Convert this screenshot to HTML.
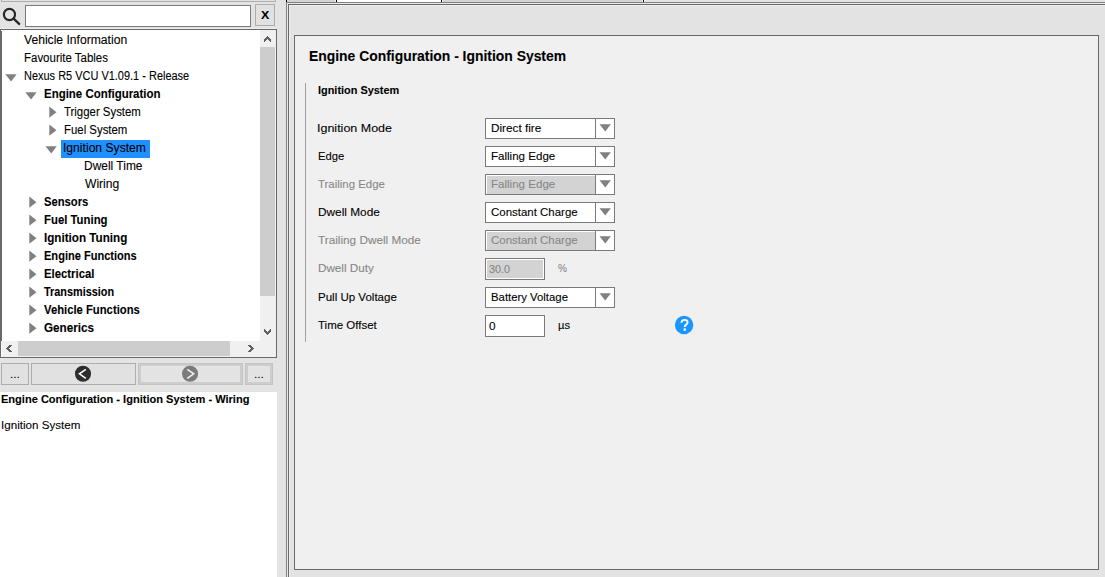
<!DOCTYPE html>
<html><head><meta charset="utf-8"><title>Ignition System</title>
<style>
html,body{margin:0;padding:0}
body{width:1105px;height:577px;overflow:hidden;background:#e3e3e3;position:relative;font-family:"Liberation Sans",sans-serif;font-size:12.3px;color:#000}
.a{position:absolute;box-sizing:border-box}
.t{position:absolute;white-space:pre;line-height:14px;height:14px;transform-origin:0 50%;margin:0;padding:0;-webkit-text-stroke:0.1px currentColor}
.b{font-weight:bold}
.btn{position:absolute;box-sizing:border-box;border:1px solid #adadad;background:#e1e1e1}
.dbtn{position:absolute;box-sizing:border-box;border:1px solid #c3c3c3;background:#e3e3e3;box-shadow:inset 0 0 0 2px #cdcdcd}
.cb{position:absolute;box-sizing:border-box;width:130px;height:21px;left:485px;border:1px solid #7a7a7a;background:#fff}
.cb i{position:absolute;left:109px;top:0;width:1px;height:19px;background:#7a7a7a}
.cb.d u{position:absolute;left:1px;top:1px;width:108px;height:18px;background:#d3d3d3}
.in{position:absolute;box-sizing:border-box;left:485px;width:60px;height:22px;border:1px solid #7a7a7a;background:#fff}
.in.d{box-shadow:inset 0 0 0 1px #fff;background:#d3d3d3}

</style></head><body>
<div class="btn" style="left:1px;top:-20px;width:275px;height:22px"></div>
<svg class="a" style="left:0;top:0" width="24" height="28" viewBox="0 0 24 28"><circle cx="9.45" cy="14.5" r="5.6" fill="none" stroke="#262626" stroke-width="2.15"/><path d="M13.6 18.7 L19.15 23.95" stroke="#262626" stroke-width="2.3" stroke-linecap="round" fill="none"/></svg>
<div class="a" style="left:25px;top:5px;width:226px;height:22px;border:1px solid #7a7a7a;background:#fff"></div>
<div class="btn" style="left:255px;top:4px;width:20px;height:22px"></div>
<div class="a" style="left:0;top:28px;width:277px;height:1px;background:#ededed"></div>
<div class="a" style="left:0;top:29px;width:277px;height:329px;background:#fff;border:1px solid #696969"></div>
<div class="a" style="left:1px;top:31px;width:1px;height:310px;background:#696969"></div>
<div class="a" style="left:61px;top:140px;width:89px;height:18px;background:#1e90ff"></div>
<div class="a" style="left:260px;top:30px;width:16px;height:311px;background:#f0f0f0"></div>
<div class="a" style="left:260px;top:47px;width:15px;height:249px;background:#cdcdcd"></div>
<div class="a" style="left:2px;top:341px;width:274px;height:16px;background:#f0f0f0"></div>
<div class="a" style="left:18px;top:341px;width:212px;height:15px;background:#cdcdcd"></div>
<svg class="a" style="left:264px;top:36px" width="7" height="6" viewBox="0 0 7 6" shape-rendering="crispEdges"><path d="M0 5h1v1h-1zM6 5h1v1h-1zM0 4h2v1h-2zM5 4h2v1h-2zM0 3h3v1h-3zM4 3h3v1h-3zM1 2h5v1h-5zM2 1h3v1h-3zM3 0h1v1h-1z" fill="#606060"/></svg>
<svg class="a" style="left:264px;top:329px" width="7" height="6" viewBox="0 0 7 6" shape-rendering="crispEdges"><path d="M0 0h1v1h-1zM6 0h1v1h-1zM0 1h2v1h-2zM5 1h2v1h-2zM0 2h3v1h-3zM4 2h3v1h-3zM1 3h5v1h-5zM2 4h3v1h-3zM3 5h1v1h-1z" fill="#606060"/></svg>
<svg class="a" style="left:6px;top:345px" width="6" height="7" viewBox="0 0 6 7" shape-rendering="crispEdges"><path d="M5 0h1v1h-1zM5 6h1v1h-1zM4 0h1v2h-1zM4 5h1v2h-1zM3 0h1v3h-1zM3 4h1v3h-1zM2 1h1v5h-1zM1 2h1v3h-1zM0 3h1v1h-1z" fill="#606060"/></svg>
<svg class="a" style="left:248px;top:345px" width="6" height="7" viewBox="0 0 6 7" shape-rendering="crispEdges"><path d="M0 0h1v1h-1zM0 6h1v1h-1zM1 0h1v2h-1zM1 5h1v2h-1zM2 0h1v3h-1zM2 4h1v3h-1zM3 1h1v5h-1zM4 2h1v3h-1zM5 3h1v1h-1z" fill="#606060"/></svg>
<svg class="a" style="left:5px;top:74px" width="13" height="9" viewBox="0 0 13 9"><path d="M0.35 0.30h11.3l-5.55 7.2z" fill="#808080"/></svg>
<svg class="a" style="left:25px;top:92px" width="13" height="9" viewBox="0 0 13 9"><path d="M0.30 0.30h11.3l-5.55 7.2z" fill="#808080"/></svg>
<svg class="a" style="left:49px;top:106px" width="9" height="13" viewBox="0 0 9 13"><path d="M0.30 0.50v11.3l7.2 -5.55z" fill="#808080"/></svg>
<svg class="a" style="left:49px;top:124px" width="9" height="13" viewBox="0 0 9 13"><path d="M0.30 0.50v11.3l7.2 -5.55z" fill="#808080"/></svg>
<svg class="a" style="left:45px;top:146px" width="13" height="9" viewBox="0 0 13 9"><path d="M0.50 0.30h11.3l-5.55 7.2z" fill="#808080"/></svg>
<svg class="a" style="left:29px;top:196px" width="9" height="13" viewBox="0 0 9 13"><path d="M0.30 0.50v11.3l7.2 -5.55z" fill="#808080"/></svg>
<svg class="a" style="left:29px;top:214px" width="9" height="13" viewBox="0 0 9 13"><path d="M0.30 0.50v11.3l7.2 -5.55z" fill="#808080"/></svg>
<svg class="a" style="left:29px;top:232px" width="9" height="13" viewBox="0 0 9 13"><path d="M0.30 0.50v11.3l7.2 -5.55z" fill="#808080"/></svg>
<svg class="a" style="left:29px;top:250px" width="9" height="13" viewBox="0 0 9 13"><path d="M0.30 0.50v11.3l7.2 -5.55z" fill="#808080"/></svg>
<svg class="a" style="left:29px;top:268px" width="9" height="13" viewBox="0 0 9 13"><path d="M0.30 0.50v11.3l7.2 -5.55z" fill="#808080"/></svg>
<svg class="a" style="left:29px;top:286px" width="9" height="13" viewBox="0 0 9 13"><path d="M0.30 0.50v11.3l7.2 -5.55z" fill="#808080"/></svg>
<svg class="a" style="left:29px;top:304px" width="9" height="13" viewBox="0 0 9 13"><path d="M0.30 0.50v11.3l7.2 -5.55z" fill="#808080"/></svg>
<svg class="a" style="left:29px;top:322px" width="9" height="13" viewBox="0 0 9 13"><path d="M0.30 0.50v11.3l7.2 -5.55z" fill="#808080"/></svg>
<div class="btn" style="left:1px;top:363px;width:28px;height:22px"></div>
<div class="btn" style="left:31px;top:363px;width:105px;height:22px"></div>
<div class="dbtn" style="left:138px;top:363px;width:105px;height:22px"></div>
<div class="dbtn" style="left:245px;top:363px;width:28px;height:22px"></div>
<svg class="a" style="left:74px;top:364px" width="18" height="20" viewBox="0 0 18 20"><circle cx="9" cy="9.8" r="8.05" fill="#2d2d2d"/><path d="M11.8 5.3 L5.4 9.8 L11.8 14.3" fill="none" stroke="#fff" stroke-width="1.5"/></svg>
<svg class="a" style="left:181px;top:364px" width="18" height="20" viewBox="0 0 18 20"><circle cx="9.05" cy="9.8" r="8.05" fill="#7b7b7b"/><path d="M6.3 5.3 L12.7 9.8 L6.3 14.3" fill="none" stroke="#f2f2f2" stroke-width="1.5"/></svg>
<div class="a" style="left:0;top:392px;width:277px;height:185px;background:#fff"></div>
<div class="a" style="left:286px;top:0;width:1px;height:2px;background:#000"></div>
<div class="a" style="left:287px;top:0;width:48px;height:2px;background:#d3d3d3"></div>
<div class="a" style="left:335px;top:0;width:1px;height:2px;background:#f4f4f4"></div>
<div class="a" style="left:336px;top:0;width:1px;height:2px;background:#000"></div>
<div class="a" style="left:337px;top:0;width:104px;height:2px;background:#fff"></div>
<div class="a" style="left:441px;top:0;width:1px;height:2px;background:#000"></div>
<div class="a" style="left:442px;top:0;width:1px;height:2px;background:#f4f4f4"></div>
<div class="a" style="left:443px;top:0;width:199px;height:2px;background:#d3d3d3"></div>
<div class="a" style="left:642px;top:0;width:1px;height:2px;background:#f8f8f8"></div>
<div class="a" style="left:643px;top:0;width:1px;height:2px;background:#000"></div>
<div class="a" style="left:644px;top:0;width:1px;height:2px;background:#f8f8f8"></div>
<div class="a" style="left:286px;top:2px;width:819px;height:1px;background:#828282"></div>
<div class="a" style="left:286px;top:2px;width:1px;height:575px;background:#828282"></div>
<div class="a" style="left:287px;top:3px;width:818px;height:1px;background:#e9e9e9"></div>
<div class="a" style="left:287px;top:3px;width:1px;height:574px;background:#e9e9e9"></div>
<div class="a" style="left:288px;top:4px;width:817px;height:1px;background:#696969"></div>
<div class="a" style="left:288px;top:4px;width:1px;height:573px;background:#696969"></div>
<div class="a" style="left:289px;top:5px;width:816px;height:1px;background:#efefef"></div>
<div class="a" style="left:289px;top:5px;width:1px;height:572px;background:#efefef"></div>
<div class="a" style="left:294px;top:35px;width:805px;height:535px;background:#f0f0f0;border:1px solid #696969"></div>
<div class="a" style="left:305px;top:83px;width:1px;height:259px;background:#a0a0a0"></div>
<div class="cb" style="top:118px"><i></i><svg class="a" style="left:113px;top:5px" width="13" height="9" viewBox="0 0 13 9"><path d="M0.50 0.30h11.3l-5.55 7.2z" fill="#808080"/></svg></div>
<div class="cb" style="top:146px"><i></i><svg class="a" style="left:113px;top:5px" width="13" height="9" viewBox="0 0 13 9"><path d="M0.50 0.30h11.3l-5.55 7.2z" fill="#808080"/></svg></div>
<div class="cb d" style="top:174px"><u></u><i></i><svg class="a" style="left:113px;top:5px" width="13" height="9" viewBox="0 0 13 9"><path d="M0.50 0.30h11.3l-5.55 7.2z" fill="#808080"/></svg></div>
<div class="cb" style="top:202px"><i></i><svg class="a" style="left:113px;top:5px" width="13" height="9" viewBox="0 0 13 9"><path d="M0.50 0.30h11.3l-5.55 7.2z" fill="#808080"/></svg></div>
<div class="cb d" style="top:230px"><u></u><i></i><svg class="a" style="left:113px;top:5px" width="13" height="9" viewBox="0 0 13 9"><path d="M0.50 0.30h11.3l-5.55 7.2z" fill="#808080"/></svg></div>
<div class="cb" style="top:287px"><i></i><svg class="a" style="left:113px;top:5px" width="13" height="9" viewBox="0 0 13 9"><path d="M0.50 0.30h11.3l-5.55 7.2z" fill="#808080"/></svg></div>
<div class="in d" style="top:258px"></div>
<div class="in" style="top:315px"></div>
<svg class="a" style="left:674px;top:315px" width="20" height="20" viewBox="0 0 20 20"><circle cx="10.1" cy="10" r="9.2" fill="#1b95ff"/><path d="M7.5 7.7 C7.5 5.8 8.9 4.9 10.6 4.9 C12.3 4.9 13.6 5.8 13.6 7.4 C13.6 9.3 10.7 9.6 10.7 11.9" fill="none" stroke="#fdfdfd" stroke-width="1.9"/><rect x="9.6" y="13.4" width="2.3" height="2.4" fill="#fdfdfd"/></svg>
<span class="t" style="left:24.00px;top:33px;transform:scaleX(0.9865)">Vehicle Information</span>
<span class="t" style="left:23.76px;top:51px;transform:scaleX(0.9327)">Favourite Tables</span>
<span class="t" style="left:23.80px;top:69px;transform:scaleX(0.8919)">Nexus R5 VCU V1.09.1 - Release</span>
<span class="t b" style="left:44.16px;top:87px;transform:scaleX(0.9318)">Engine Configuration</span>
<span class="t" style="left:63.80px;top:105px;transform:scaleX(0.9268)">Trigger System</span>
<span class="t" style="left:63.57px;top:123px;transform:scaleX(0.9269)">Fuel System</span>
<span class="t" style="left:62.81px;top:141px;transform:scaleX(0.9866)">Ignition System</span>
<span class="t" style="left:83.63px;top:159px;transform:scaleX(0.9729)">Dwell Time</span>
<span class="t" style="left:85.20px;top:177px;transform:scaleX(0.9824)">Wiring</span>
<span class="t b" style="left:44.19px;top:195px;transform:scaleX(0.9128)">Sensors</span>
<span class="t b" style="left:44.16px;top:213px;transform:scaleX(0.9241)">Fuel Tuning</span>
<span class="t b" style="left:44.14px;top:231px;transform:scaleX(0.9478)">Ignition Tuning</span>
<span class="t b" style="left:44.19px;top:249px;transform:scaleX(0.8991)">Engine Functions</span>
<span class="t b" style="left:44.16px;top:267px;transform:scaleX(0.9211)">Electrical</span>
<span class="t b" style="left:44.40px;top:285px;transform:scaleX(0.8836)">Transmission</span>
<span class="t b" style="left:44.40px;top:303px;transform:scaleX(0.9163)">Vehicle Functions</span>
<span class="t b" style="left:44.41px;top:321px;transform:scaleX(0.9519)">Generics</span>
<span class="t b" style="left:0.63px;top:392px;transform:scaleX(0.9698);font-size:11.4px">Engine Configuration - Ignition System - Wiring</span>
<span class="t" style="left:1.17px;top:418px;transform:scaleX(1.0199);font-size:11.4px">Ignition System</span>
<span class="t b" style="left:308.61px;top:48px;transform:scaleX(0.9926);line-height:16px;height:16px;font-size:14px">Engine Configuration - Ignition System</span>
<span class="t b" style="left:317.92px;top:83px;transform:scaleX(0.9571);font-size:11.4px">Ignition System</span>
<span class="t" style="left:317.10px;top:121px;transform:scaleX(1.0970);font-size:11.4px">Ignition Mode</span>
<span class="t" style="left:317.88px;top:149px;transform:scaleX(0.9858);font-size:11.4px">Edge</span>
<span class="t" style="left:318.20px;top:177px;transform:scaleX(1.0030);font-size:11.4px;color:#878787">Trailing Edge</span>
<span class="t" style="left:317.84px;top:205px;transform:scaleX(1.0386);font-size:11.4px">Dwell Mode</span>
<span class="t" style="left:318.20px;top:233px;transform:scaleX(1.0333);font-size:11.4px;color:#878787">Trailing Dwell Mode</span>
<span class="t" style="left:317.85px;top:261px;transform:scaleX(1.0256);font-size:11.4px;color:#878787">Dwell Duty</span>
<span class="t" style="left:317.87px;top:290px;transform:scaleX(1.0123);font-size:11.4px">Pull Up Voltage</span>
<span class="t" style="left:318.20px;top:318px;transform:scaleX(1.0086);font-size:11.4px">Time Offset</span>
<span class="t" style="left:491.15px;top:121px;transform:scaleX(1.0303);font-size:11.4px">Direct fire</span>
<span class="t" style="left:491.19px;top:149px;transform:scaleX(1.0145);font-size:11.4px">Falling Edge</span>
<span class="t" style="left:491.19px;top:177px;transform:scaleX(1.0145);font-size:11.4px;color:#878787">Falling Edge</span>
<span class="t" style="left:491.18px;top:205px;transform:scaleX(1.0061);font-size:11.4px">Constant Charge</span>
<span class="t" style="left:491.18px;top:233px;transform:scaleX(1.0061);font-size:11.4px;color:#878787">Constant Charge</span>
<span class="t" style="left:489.11px;top:262px;transform:scaleX(0.9497);font-size:11.4px;color:#878787">30.0</span>
<span class="t" style="left:558.00px;top:261px;transform:scaleX(0.8800);font-size:11.4px;color:#878787">%</span>
<span class="t" style="left:490.50px;top:290px;transform:scaleX(0.9961);font-size:11.4px">Battery Voltage</span>
<span class="t" style="left:489.20px;top:319px;transform:scaleX(1.0333);font-size:11.4px">0</span>
<span class="t" style="left:557.62px;top:318px;transform:scaleX(0.9818);font-size:11.4px">µs</span>
<span class="t b" style="left:260.80px;top:8px;transform:scaleX(1.0857);font-size:11.4px">X</span>
<span class="t" style="left:9.96px;top:367px;transform:scaleX(1.0375);font-size:11.4px">...</span>
<span class="t" style="left:254.16px;top:367px;transform:scaleX(1.0375);font-size:11.4px">...</span>
</body></html>
